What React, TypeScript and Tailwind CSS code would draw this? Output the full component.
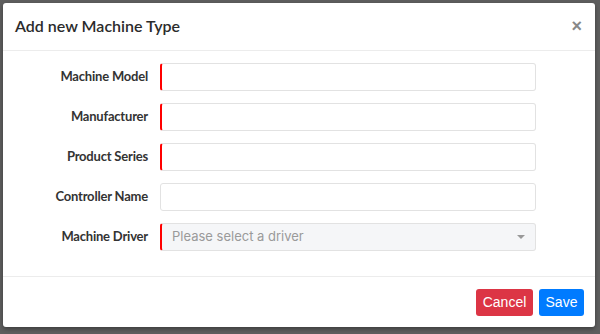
import React from "react";

const fields = [
  { label: "Machine Model", required: true },
  { label: "Manufacturer", required: true },
  { label: "Product Series", required: true },
  { label: "Controller Name", required: false },
];

export default function App() {
  return (
    <div
      className="w-[600px] h-[334px] bg-[#5e5e5e] pt-[3px] pl-[3px]"
      style={{ fontFamily: "Lato, 'Noto Sans', sans-serif" }}
    >
      <div className="w-[592px] h-[324px] bg-white rounded-[3px] shadow-[0_2px_4px_rgba(0,0,0,0.35)] flex flex-col">
        <div className="h-[48px] border-b border-[#ececec] flex items-center justify-between pl-[12px] pr-[12px] pb-[2px]">
          <div className="text-[16px] text-[#2b2b2b] font-semibold">Add new Machine Type</div>
          <div className="text-[#888] text-[18px] font-bold leading-none pr-[1px]" style={{ fontFamily: "'Liberation Sans', sans-serif" }}>×</div>
        </div>
        <div className="flex-1 pt-[12px] flex flex-col gap-[12px]">
          {fields.map((f) => (
            <div key={f.label} className="flex items-center">
              <div className="w-[145px] text-right text-[13px] font-bold text-[#333] tracking-[-0.2px]">{f.label}</div>
              <div
                className={
                  "ml-[12px] w-[376px] h-[28px] rounded-[3px] border border-[#e2e2e2] bg-white " +
                  (f.required ? "border-l-2 border-l-[#ff0000]" : "")
                }
              />
            </div>
          ))}
          <div className="flex items-center">
            <div className="w-[145px] text-right text-[13px] font-bold text-[#333] tracking-[-0.2px]">Machine Driver</div>
            <div className="ml-[12px] w-[376px] h-[28px] rounded-[3px] border border-[#e2e2e2] border-l-2 border-l-[#ff0000] bg-[#f5f6f8] flex items-center justify-between pl-[10px] pr-[10px]">
              <span className="text-[13px] text-[#9a9a9a]" style={{ fontFamily: "Inter, sans-serif" }}>Please select a driver</span>
              <svg width="8" height="5" viewBox="0 0 8 5">
                <path d="M0 0 L8 0 L4 4 Z" fill="#999" />
              </svg>
            </div>
          </div>
        </div>
        <div
          className="h-[51px] border-t border-[#ececec] flex items-center justify-end gap-[6px] pr-[11px]"
          style={{ fontFamily: "'Liberation Sans', Arial, sans-serif" }}
        >
          <button className="h-[27px] w-[57px] rounded-[3px] bg-[#dc3545] text-white text-[14px]">Cancel</button>
          <button className="h-[27px] w-[45px] rounded-[3px] bg-[#007bff] text-white text-[14px]">Save</button>
        </div>
      </div>
    </div>
  );
}
